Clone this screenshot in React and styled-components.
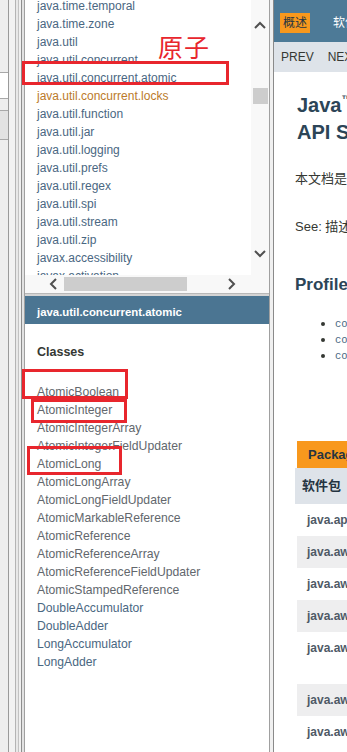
import React from 'react';
import styled, { createGlobalStyle } from 'styled-components';

const GlobalStyle = createGlobalStyle`
  html, body { margin: 0; padding: 0; background: #f0f0f0; }
  body {
    width: 347px; height: 752px; overflow: hidden;
    font-family: "Liberation Sans", Arial, "Noto Sans CJK SC", sans-serif;
  }
`;

const Page = styled.div`
  position: relative;
  display: flex;
  width: 347px;
  height: 752px;
  overflow: hidden;
  background: #f0f0f0;
`;

/* ---------- left edge (other frames' borders) ---------- */
const Strip = styled.div`
  display: flex;
  flex: none;
  height: 100%;
`;
const StripCol = styled.div`
  flex: none;
  width: ${p => p.$w}px;
  background: ${p => p.$bg};
  border-right: 1px solid ${p => p.$line};
  display: flex;
  flex-direction: column;
`;
const StripInput = styled.div`
  margin-top: ${p => p.$top}px;
  height: ${p => p.$h}px;
  background: ${p => p.$bg};
  border-top: 1px solid #a8a8a8;
  border-bottom: 1px solid #a8a8a8;
`;

/* ---------- left frames ---------- */
const LeftFrame = styled.div`
  flex: none;
  width: 244px;
  display: flex;
  flex-direction: column;
  border-right: 1px solid #a0a0a0;
`;
const PackageFrame = styled.div`
  flex: none;
  height: 293px;
  display: flex;
  flex-direction: column;
  background: #fff;
`;
const ListArea = styled.div`
  flex: 1;
  display: flex;
  min-height: 0;
`;
const Viewport = styled.div`
  flex: 1;
  overflow: hidden;
  background: #fff;
`;
const PkgList = styled.ul`
  list-style: none;
  margin: -3px 0 0;
  padding: 0 0 0 12px;
`;
const PkgItem = styled.li`
  font-size: 12px;
  line-height: 18px;
  height: 18px;
  white-space: nowrap;
  color: ${p => (p.$hover ? '#bb7a2a' : '#4a6782')};
`;
const VScroll = styled.div`
  flex: none;
  width: 18px;
  background: #f8f8f8;
  display: flex;
  flex-direction: column;
  align-items: center;
`;
const Arrow = styled.div`
  display: flex;
  align-items: center;
  justify-content: center;
  width: 18px;
  height: 18px;
  margin-top: ${p => p.$mt || 0}px;
`;
const VThumb = styled.div`
  width: 15px;
  height: 16px;
  margin-top: ${p => p.$mt}px;
  margin-left: 1px;
  background: #cdcdcd;
`;
const HScroll = styled.div`
  flex: none;
  height: 18px;
  background: #f8f8f8;
  display: flex;
  align-items: center;
`;
const HThumb = styled.div`
  width: 123px;
  height: 14px;
  background: #cdcdcd;
  margin-left: 2px;
`;
const Spacer = styled.div`
  flex: ${p => p.$flex || 'none'};
  width: ${p => p.$w || 0}px;
  height: ${p => p.$h || 0}px;
`;
const FrameSplit = styled.div`
  flex: none;
  height: 3px;
  background: #d4d4d4;
  border-top: 1px solid #b8b8b8;
  box-sizing: border-box;
`;
const ClassFrame = styled.div`
  flex: 1;
  background: #fff;
  display: flex;
  flex-direction: column;
`;
const Bar = styled.div`
  height: 28px;
  box-sizing: border-box;
  padding: 5px 0 0 12px;
  line-height: 23px;
  background: #4b7592;
  color: #fff;
  font-weight: bold;
  font-size: 11.4px;
  white-space: nowrap;
`;
const ClassHeading = styled.div`
  margin: 19px 0 0 12px;
  font-size: 12.5px;
  line-height: 18px;
  font-weight: bold;
  color: #353833;
`;
const ClassList = styled.ul`
  list-style: none;
  margin: 22px 0 0;
  padding: 0 0 0 12px;
`;
const ClassItem = styled.li`
  font-size: 12.2px;
  line-height: 18px;
  height: 18px;
  white-space: nowrap;
  color: ${p => (p.$atomic ? '#62676d' : '#4a6782')};
`;

/* ---------- divider + right frame ---------- */
const Divider = styled.div`
  flex: none;
  width: 3px;
  background: #f0f0f0;
`;
const RightFrame = styled.div`
  flex: 1;
  min-width: 0;
  overflow: hidden;
  background: #fff;
  border-left: 1px solid #8a8a8a;
`;
const Inner = styled.div`
  width: 620px;
`;
const TopNav = styled.div`
  height: 42px;
  background: #4d7a97;
  display: flex;
  align-items: center;
  padding-left: 6px;
  gap: 20px;
`;
const NavTab = styled.div`
  font-size: 12px;
  line-height: 20px;
  padding: 0 3px;
  margin-top: 4px;
  background: ${p => (p.$active ? '#f8981d' : 'transparent')};
  color: ${p => (p.$active ? '#253441' : '#ffffff')};
`;
const SubNav = styled.div`
  height: 30px;
  background: #dee3e9;
  display: flex;
  align-items: center;
  padding-left: 7px;
  gap: 14px;
  font-size: 12px;
  color: #353833;
`;
const Content = styled.div`
  padding: 0 0 0 21px;
`;
const Title = styled.h1`
  margin: 20px 0 0 2px;
  font-size: 20px;
  line-height: 27px;
  font-weight: bold;
  color: #2c4557;
  sup { font-size: 11px; vertical-align: top; line-height: 14px; }
`;
const Para = styled.p`
  margin: ${p => p.$mt}px 0 0;
  font-size: 13px;
  line-height: 18px;
  color: #353833;
  white-space: nowrap;
`;
const H2 = styled.h2`
  margin: 38px 0 0;
  font-size: 17px;
  line-height: 22px;
  font-weight: bold;
  color: #2c4557;
`;
const Bullets = styled.ul`
  margin: 20px 0 0;
  padding: 0 0 0 40px;
  li {
    font-family: "Liberation Mono", "DejaVu Sans Mono", monospace;
    font-size: 10.5px;
    line-height: 16px;
    color: #4a6782;
  }
  li::marker { color: #353833; font-size: 13px; }
`;
const Table = styled.div`
  margin: 77px 0 0 2px;
`;
const Caption = styled.div`
  height: 27px;
  line-height: 27px;
  background: #f8981d;
  padding-left: 11px;
  font-size: 13px;
  font-weight: bold;
  color: #253441;
`;
const HeadRow = styled.div`
  height: 36px;
  line-height: 36px;
  background: #dee3e9;
  margin-left: -2px;
  padding-left: 7px;
  font-size: 13px;
  font-weight: bold;
  color: #253441;
`;
const Row = styled.div`
  height: ${p => p.$h}px;
  box-sizing: border-box;
  padding: 8px 0 0 10px;
  line-height: 17px;
  background: ${p => (p.$alt ? '#eeeeef' : '#ffffff')};
  font-size: 12px;
  font-weight: bold;
  color: #4f5a66;
`;

/* ---------- annotations ---------- */
const RedBox = styled.div`
  position: absolute;
  box-sizing: border-box;
  border: 3px solid #e8262d;
  pointer-events: none;
`;
const RedNote = styled.div`
  position: absolute;
  left: 158px;
  top: 31px;
  font-family: "Noto Sans CJK SC", sans-serif;
  font-size: 25px;
  line-height: 30px;
  color: #e8262d;
  letter-spacing: 1px;
`;

const Chevron = ({ dir }) => {
  const pts = {
    up: '1,7 6,2 11,7',
    down: '1,2 6,7 11,2',
    left: '7,1 2,6 7,11',
    right: '2,1 7,6 2,11',
  }[dir];
  const vertical = dir === 'up' || dir === 'down';
  return (
    <svg width={vertical ? 12 : 9} height={vertical ? 9 : 12} viewBox={vertical ? '0 0 12 9' : '0 0 9 12'}>
      <polyline points={pts} fill="none" stroke="#505050" strokeWidth="2" />
    </svg>
  );
};

const packages = [
  'java.time.temporal', 'java.time.zone', 'java.util', 'java.util.concurrent',
  'java.util.concurrent.atomic', 'java.util.concurrent.locks', 'java.util.function',
  'java.util.jar', 'java.util.logging', 'java.util.prefs', 'java.util.regex',
  'java.util.spi', 'java.util.stream', 'java.util.zip', 'javax.accessibility',
  'javax.activation',
];

const classes = [
  'AtomicBoolean', 'AtomicInteger', 'AtomicIntegerArray', 'AtomicIntegerFieldUpdater',
  'AtomicLong', 'AtomicLongArray', 'AtomicLongFieldUpdater', 'AtomicMarkableReference',
  'AtomicReference', 'AtomicReferenceArray', 'AtomicReferenceFieldUpdater',
  'AtomicStampedReference', 'DoubleAccumulator', 'DoubleAdder', 'LongAccumulator', 'LongAdder',
];

const rows = [
  { name: 'java.applet', h: 32 },
  { name: 'java.awt', h: 32 },
  { name: 'java.awt.color', h: 32 },
  { name: 'java.awt.datatransfer', h: 32 },
  { name: 'java.awt.dnd', h: 52 },
  { name: 'java.awt.event', h: 32 },
  { name: 'java.awt.font', h: 32 },
];

export default function App() {
  return (
    <>
      <GlobalStyle />
      <Page>
        <Strip>
          <StripCol $w={8} $bg="#eeeeee" $line="#9a9a9a">
            <StripInput $top={72} $h={25} $bg="#ffffff" />
            <StripInput $top={11} $h={28} $bg="#e2e2e2" />
          </StripCol>
          <StripCol $w={6} $bg="#f2f2f2" $line="#b4b4b4" />
          <StripCol $w={2} $bg="#e8e8e8" $line="#c2c2c2" />
          <StripCol $w={2} $bg="#f0f0f0" $line="#8e8e8e" />
          <StripCol $w={2} $bg="#e2e2e2" $line="#a0a0a0" />
        </Strip>

        <LeftFrame>
          <PackageFrame>
            <ListArea>
              <Viewport>
                <PkgList>
                  {packages.map(p => (
                    <PkgItem key={p} $hover={p === 'java.util.concurrent.locks'}>{p}</PkgItem>
                  ))}
                </PkgList>
              </Viewport>
              <VScroll>
                <Arrow $mt={16}><Chevron dir="up" /></Arrow>
                <VThumb $mt={54} />
                <Spacer $flex={1} />
                <Arrow><Chevron dir="down" /></Arrow>
                <Spacer $h={13} />
              </VScroll>
            </ListArea>
            <HScroll>
              <Spacer $w={19} />
              <Arrow><Chevron dir="left" /></Arrow>
              <HThumb />
              <Spacer $flex={1} />
              <Arrow><Chevron dir="right" /></Arrow>
              <Spacer $w={29} />
            </HScroll>
          </PackageFrame>
          <FrameSplit />
          <ClassFrame>
            <Bar>java.util.concurrent.atomic</Bar>
            <ClassHeading>Classes</ClassHeading>
            <ClassList>
              {classes.map(c => (
                <ClassItem key={c} $atomic={c.startsWith('Atomic')}>{c}</ClassItem>
              ))}
            </ClassList>
          </ClassFrame>
        </LeftFrame>

        <Divider />

        <RightFrame>
          <Inner>
            <TopNav>
              <NavTab $active>概述</NavTab>
              <NavTab>软件包</NavTab>
              <NavTab>类</NavTab>
            </TopNav>
            <SubNav>
              <span>PREV</span>
              <span>NEXT</span>
            </SubNav>
            <Content>
              <Title>
                Java<sup>™</sup> Platform, Standard Edition 8<br />API Specification
              </Title>
              <Para $mt={24}>本文档是 Java™ Platform Standard Edition 8 的 API 规范。</Para>
              <Para $mt={30}>See: 描述</Para>
              <H2>Profiles</H2>
              <Bullets>
                <li>compact1</li>
                <li>compact2</li>
                <li>compact3</li>
              </Bullets>
              <Table>
                <Caption>Packages</Caption>
                <HeadRow>软件包</HeadRow>
                {rows.map((r, i) => (
                  <Row key={r.name} $h={r.h} $alt={i % 2 === 1}>{r.name}</Row>
                ))}
              </Table>
            </Content>
          </Inner>
        </RightFrame>

        <RedNote>原子</RedNote>
        <RedBox style={{ left: 22, top: 61, width: 207, height: 24 }} />
        <RedBox style={{ left: 22, top: 369, width: 106, height: 30 }} />
        <RedBox style={{ left: 31, top: 399, width: 96, height: 24 }} />
        <RedBox style={{ left: 27, top: 446, width: 95, height: 29 }} />
      </Page>
    </>
  );
}
